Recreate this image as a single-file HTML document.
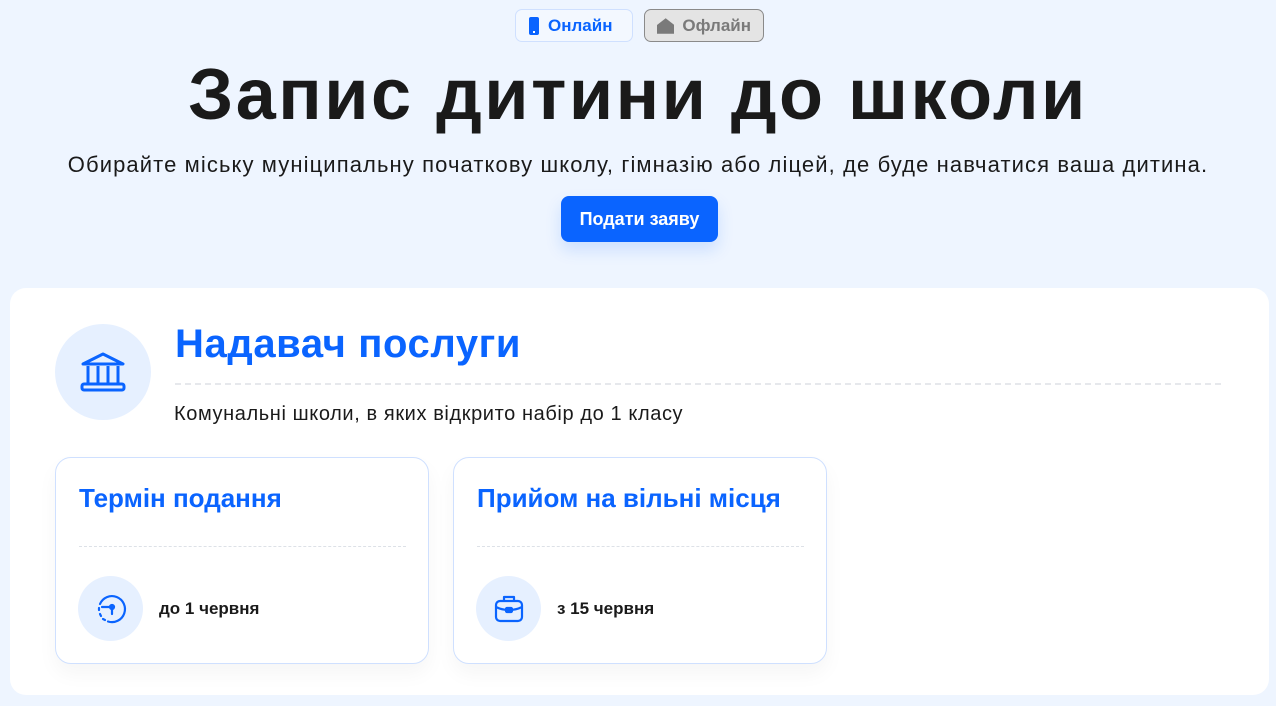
<!DOCTYPE html>
<html><head><meta charset="utf-8"><style>
*{margin:0;padding:0;box-sizing:border-box}
body{width:1276px;height:706px;background:#eef5ff;font-family:"Liberation Sans",sans-serif;position:relative;overflow:hidden;color:#1a1a1a}
.tag{position:absolute;top:9px;height:33px;border-radius:7px;font-weight:bold;font-size:17px;display:flex;align-items:center;gap:8px;padding:0 12px}
.on{left:515px;width:118px;border:1px solid #cfe0ff;background:#f3f8ff;color:#0a64ff}
.off{left:644px;width:120px;border:1px solid #8a8a8a;background:#e4e4e4;color:#7a7a7a}
h1{position:absolute;top:54px;left:0;width:1276px;text-align:center;font-size:72px;font-weight:bold;letter-spacing:2.5px;color:#1a1a1a}
.sub{position:absolute;top:152px;left:0;width:1276px;text-align:center;font-size:22px;letter-spacing:1.1px}
.btn{position:absolute;left:561px;top:196px;width:157px;height:46px;background:#0a64ff;border-radius:8px;color:#fff;font-weight:bold;font-size:18px;display:flex;align-items:center;justify-content:center;box-shadow:0 8px 16px rgba(10,100,255,.15)}
.card{position:absolute;left:10px;top:288px;width:1259px;height:407px;background:#fff;border-radius:16px}
.circ{position:absolute;border-radius:50%;background:#e6f0ff;display:flex;align-items:center;justify-content:center}
h2{position:absolute;left:175px;top:322px;font-size:40px;letter-spacing:0.6px;color:#0a64ff;font-weight:bold}
.dash{position:absolute}
.desc{position:absolute;left:174px;top:403px;font-size:20px;letter-spacing:0.6px}
.sc{position:absolute;top:457px;width:374px;height:207px;border:1px solid #cfe0ff;border-radius:16px;background:#fff;box-shadow:0 10px 20px rgba(0,0,0,.04)}
.sc h3{position:absolute;left:23px;top:25px;font-size:26px;color:#0a64ff;font-weight:bold}
.sc .d{position:absolute;left:23px;top:88px;width:327px;border-top:1px dashed #dde1e7}
.sc .t{position:absolute;left:103px;top:141px;font-size:17px;font-weight:bold}
</style></head><body>
<div class="tag on"><svg width="12" height="18" viewBox="0 0 12 18"><rect x="1" y="0" width="10" height="18" rx="2" fill="#0a64ff"/><rect x="5" y="14" width="2" height="2" fill="#fff"/></svg>Онлайн</div>
<div class="tag off"><svg width="18" height="16" viewBox="0 0 18 16"><path d="M9 0L0 7v9h18V7z" fill="#7a7a7a"/></svg>Офлайн</div>
<h1>Запис дитини до школи</h1>
<div class="sub">Обирайте міську муніципальну початкову школу, гімназію або ліцей, де буде навчатися ваша дитина.</div>
<div class="btn">Подати заяву</div>
<div class="card"></div>
<div class="circ" style="left:55px;top:324px;width:96px;height:96px"><svg width="46" height="40" viewBox="0 0 46 40" fill="none" stroke="#0a64ff" stroke-width="3" stroke-linejoin="round"><path d="M3 12L23 2l20 10z"/><path d="M8 14v18M18 14v18M28 14v18M38 14v18"/><rect x="2" y="32" width="42" height="6" rx="2"/></svg></div>
<h2>Надавач послуги</h2>
<div class="dash" style="left:175px;top:383px;width:1046px;border-top:2px dashed #e6e8ec;"></div>
<div class="desc">Комунальні школи, в яких відкрито набір до 1 класу</div>
<div class="sc" style="left:55px"><h3>Термін подання</h3><div class="d"></div>
<div class="circ" style="left:22px;top:118px;width:65px;height:65px"><svg width="34" height="34" viewBox="0 0 34 34" fill="none" stroke="#0a64ff" stroke-width="2.2" stroke-linecap="round"><path d="M6 12A13 13 0 1 1 14 29.5"/><path d="M5 16v2M6 22l1 2M9 27l2 1" /><path d="M8 15h10"/><circle cx="18" cy="15" r="2"/><path d="M18 17v5"/></svg></div>
<div class="t">до 1 червня</div></div>
<div class="sc" style="left:453px"><h3>Прийом на вільні місця</h3><div class="d"></div>
<div class="circ" style="left:22px;top:118px;width:65px;height:65px"><svg width="34" height="34" viewBox="0 0 34 34" fill="none" stroke="#0a64ff" stroke-width="2.2" stroke-linejoin="round"><path d="M12 9V5h10v4"/><rect x="4" y="9" width="26" height="20" rx="4"/><path d="M4 15c8 4 18 4 26 0"/><rect x="14" y="16" width="6" height="4" rx="1"/></svg></div>
<div class="t">з 15 червня</div></div>
</body></html>
